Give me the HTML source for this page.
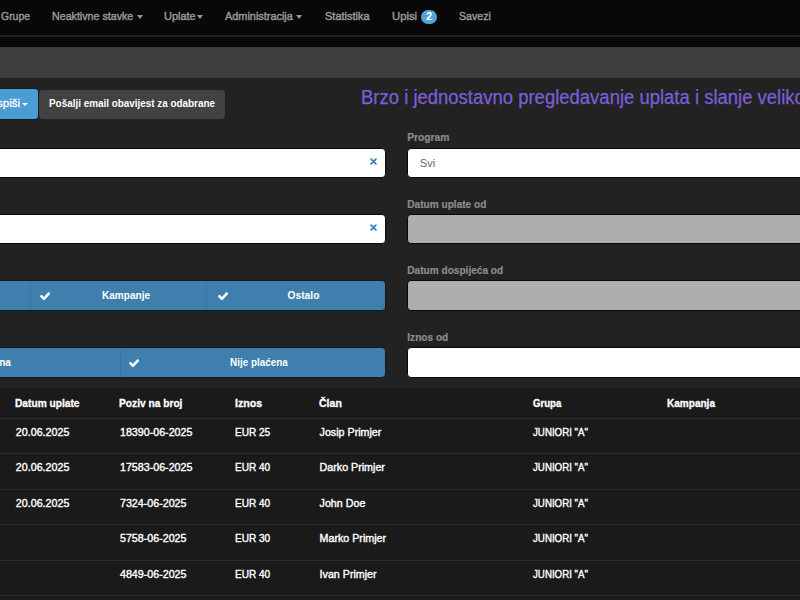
<!DOCTYPE html>
<html><head><meta charset="utf-8"><style>
*{margin:0;padding:0;box-sizing:border-box}
html,body{width:800px;height:600px;overflow:hidden;background:#222222;font-family:"Liberation Sans",sans-serif}
.a{position:absolute;white-space:nowrap}
.r{position:absolute}
</style></head><body>
<div class="r" style="left:0;top:0;width:800px;height:47px;background:#080808"></div>
<div class="r" style="left:0;top:35px;width:800px;height:2px;background:#202020"></div>
<div class="a" style="left:0.98px;top:6.49px;font-size:11px;line-height:20px;font-weight:normal;color:#9a9a9a;transform:scaleX(0.95);transform-origin:0 0;-webkit-text-stroke:0.42px #9a9a9a">Grupe</div>
<div class="a" style="left:51.95px;top:6.49px;font-size:11px;line-height:20px;font-weight:normal;color:#9a9a9a;transform:scaleX(0.97);transform-origin:0 0;-webkit-text-stroke:0.42px #9a9a9a">Neaktivne stavke</div>
<div class="a" style="left:164.12px;top:6.49px;font-size:11px;line-height:20px;font-weight:normal;color:#9a9a9a;transform:scaleX(0.9973);transform-origin:0 0;-webkit-text-stroke:0.42px #9a9a9a">Uplate</div>
<div class="a" style="left:225.20px;top:6.49px;font-size:11px;line-height:20px;font-weight:normal;color:#9a9a9a;transform:scaleX(0.9909);transform-origin:0 0;-webkit-text-stroke:0.42px #9a9a9a">Administracija</div>
<div class="a" style="left:324.95px;top:6.49px;font-size:11px;line-height:20px;font-weight:normal;color:#9a9a9a;transform:scaleX(1.0018);transform-origin:0 0;-webkit-text-stroke:0.42px #9a9a9a">Statistika</div>
<div class="a" style="left:391.80px;top:6.49px;font-size:11px;line-height:20px;font-weight:normal;color:#9a9a9a;transform:scaleX(1.0236);transform-origin:0 0;-webkit-text-stroke:0.42px #9a9a9a">Upisi</div>
<div class="a" style="left:458.97px;top:6.49px;font-size:11px;line-height:20px;font-weight:normal;color:#9a9a9a;transform:scaleX(0.9627);transform-origin:0 0;-webkit-text-stroke:0.42px #9a9a9a">Savezi</div>
<div class="r" style="left:136.5px;top:15px;width:0;height:0;border-left:3.5px solid transparent;border-right:3.5px solid transparent;border-top:4px solid #9a9a9a"></div>
<div class="r" style="left:196.5px;top:15px;width:0;height:0;border-left:3.5px solid transparent;border-right:3.5px solid transparent;border-top:4px solid #9a9a9a"></div>
<div class="r" style="left:296.2px;top:15px;width:0;height:0;border-left:3.5px solid transparent;border-right:3.5px solid transparent;border-top:4px solid #9a9a9a"></div>
<div class="a" style="left:421px;top:10.3px;width:16.2px;height:14.2px;border-radius:8px;background:#55a2da"></div>
<div class="a" style="left:426.18px;top:7.40px;font-size:10.4px;line-height:20px;font-weight:bold;color:#fff;-webkit-text-stroke:0.2px #fff">2</div>
<div class="r" style="left:0;top:47px;width:800px;height:31px;background:#3d3d3d"></div>
<div class="r" style="left:-20px;top:88px;width:59px;height:32px;border-radius:4px;background:#4b9dd3;border:1px solid #0a1a28"></div>
<div class="a" style="right:780px;top:93.42px;font-size:11.5px;line-height:20px;color:#fff;-webkit-text-stroke:0.3px #fff">Ispiši</div>
<div class="r" style="left:22px;top:103.3px;width:0;height:0;border-left:3.0px solid transparent;border-right:3.0px solid transparent;border-top:3px solid #fff"></div>
<div class="r" style="left:39px;top:90px;width:186px;height:29px;border-radius:4px;background:#424242"></div>
<div class="a" style="left:49.31px;top:93.26px;font-size:10.5px;line-height:20px;font-weight:bold;color:#fff;transform:scaleX(0.942);transform-origin:0 0">Pošalji email obavijest za odabrane</div>
<div class="a" style="left:360.75px;top:88.31px;font-size:19.3px;line-height:20px;font-weight:normal;color:#7b5fd8;transform:scaleX(0.9585);transform-origin:0 0;-webkit-text-stroke:0.25px #7b5fd8">Brzo i jednostavno pregledavanje uplata i slanje velikog broja</div>
<div class="r" style="left:-10px;top:148px;width:396px;height:30px;border-radius:4px;background:#fff;border:1px solid #080808"></div>
<svg class="r" style="left:370px;top:158px" width="7" height="7" viewBox="0 0 7 7"><path d="M1.1 1.1L5.9 5.9M5.9 1.1L1.1 5.9" stroke="#3580bf" stroke-width="1.7" stroke-linecap="round"/></svg>
<div class="r" style="left:-10px;top:214px;width:396px;height:30px;border-radius:4px;background:#fff;border:1px solid #080808"></div>
<svg class="r" style="left:370px;top:224px" width="7" height="7" viewBox="0 0 7 7"><path d="M1.1 1.1L5.9 5.9M5.9 1.1L1.1 5.9" stroke="#3580bf" stroke-width="1.7" stroke-linecap="round"/></svg>
<div class="r" style="left:-10px;top:280px;width:396px;height:31px;border-radius:4px;background:#3f7fad;border:1px solid #0e1a24"></div>
<div class="r" style="left:-10px;top:347px;width:396px;height:31px;border-radius:4px;background:#3f7fad;border:1px solid #0e1a24"></div>
<div class="r" style="left:30px;top:281px;width:1px;height:29px;background:#3a76a2"></div>
<div class="r" style="left:206px;top:281px;width:1px;height:29px;background:#3a76a2"></div>
<svg class="r" style="left:40.2px;top:291.8px" width="10.2" height="8" viewBox="121 310 1550 1148" preserveAspectRatio="none"><path d="M1671 566q0 40-28 68l-724 724-136 136q-28 28-68 28t-68-28l-136-136-362-362q-28-28-28-68t28-68l136-136q28-28 68-28t68 28l294 295 656-657q28-28 68-28t68 28l136 136q28 28 28 68z" fill="#fff"/></svg>
<svg class="r" style="left:218px;top:291.8px" width="10.2" height="8" viewBox="121 310 1550 1148" preserveAspectRatio="none"><path d="M1671 566q0 40-28 68l-724 724-136 136q-28 28-68 28t-68-28l-136-136-362-362q-28-28-28-68t28-68l136-136q28-28 68-28t68 28l294 295 656-657q28-28 68-28t68 28l136 136q28 28 28 68z" fill="#fff"/></svg>
<div class="a" style="left:102.00px;top:285.91px;font-size:10.06px;line-height:20px;font-weight:bold;color:#fff">Kampanje</div>
<div class="a" style="left:287.59px;top:285.86px;font-size:10.23px;line-height:20px;font-weight:bold;color:#fff">Ostalo</div>
<div class="r" style="left:120px;top:348px;width:1px;height:29px;background:#3a76a2"></div>
<svg class="r" style="left:129px;top:358.5px" width="10.2" height="8" viewBox="121 310 1550 1148" preserveAspectRatio="none"><path d="M1671 566q0 40-28 68l-724 724-136 136q-28 28-68 28t-68-28l-136-136-362-362q-28-28-28-68t28-68l136-136q28-28 68-28t68 28l294 295 656-657q28-28 68-28t68 28l136 136q28 28 28 68z" fill="#fff"/></svg>
<div class="a" style="left:-27.21px;top:352.70px;font-size:10.1px;line-height:20px;font-weight:bold;color:#fff">Plaćena</div>
<div class="a" style="left:230.31px;top:352.70px;font-size:10.1px;line-height:20px;font-weight:bold;color:#fff;transform:scaleX(0.98);transform-origin:0 0">Nije plaćena</div>
<div class="a" style="left:407.28px;top:128.25px;font-size:10.24px;line-height:20px;font-weight:bold;color:#8c8c8c;-webkit-text-stroke:0.2px #8c8c8c">Program</div>
<div class="a" style="left:407.29px;top:194.90px;font-size:10.1px;line-height:20px;font-weight:bold;color:#8c8c8c;-webkit-text-stroke:0.2px #8c8c8c">Datum uplate od</div>
<div class="a" style="left:407.29px;top:261.30px;font-size:10.1px;line-height:20px;font-weight:bold;color:#8c8c8c;-webkit-text-stroke:0.2px #8c8c8c">Datum dospijeća od</div>
<div class="a" style="left:407.29px;top:327.70px;font-size:10.1px;line-height:20px;font-weight:bold;color:#8c8c8c;-webkit-text-stroke:0.2px #8c8c8c">Iznos od</div>
<div class="r" style="left:407px;top:148px;width:400px;height:30px;border-radius:4px;background:#fff;border:1px solid #080808"></div>
<div class="r" style="left:407px;top:214px;width:400px;height:30px;border-radius:4px;background:#adafae;border:1px solid #080808"></div>
<div class="r" style="left:407px;top:280px;width:400px;height:31px;border-radius:4px;background:#adafae;border:1px solid #080808"></div>
<div class="r" style="left:407px;top:347px;width:400px;height:31px;border-radius:4px;background:#fff;border:1px solid #080808"></div>
<div class="a" style="left:420.06px;top:152.83px;font-size:10.87px;line-height:20px;font-weight:normal;color:#666">Svi</div>
<div class="r" style="left:0;top:388px;width:800px;height:212px;background:#1a1a1a"></div>
<div class="r" style="left:0;top:418px;width:800px;height:1px;background:#2b2b2b"></div>
<div class="r" style="left:0;top:453px;width:800px;height:1px;background:#2b2b2b"></div>
<div class="r" style="left:0;top:489px;width:800px;height:1px;background:#2b2b2b"></div>
<div class="r" style="left:0;top:524px;width:800px;height:1px;background:#2b2b2b"></div>
<div class="r" style="left:0;top:560px;width:800px;height:1px;background:#2b2b2b"></div>
<div class="r" style="left:0;top:595px;width:800px;height:1px;background:#2b2b2b"></div>
<div class="a" style="left:14.69px;top:394.03px;font-size:10.3px;line-height:20px;font-weight:bold;color:#fff;transform:scaleX(0.9893);transform-origin:0 0;-webkit-text-stroke:0.3px #fff">Datum uplate</div>
<div class="a" style="left:119.09px;top:394.03px;font-size:10.3px;line-height:20px;font-weight:bold;color:#fff;transform:scaleX(0.9903);transform-origin:0 0;-webkit-text-stroke:0.3px #fff">Poziv na broj</div>
<div class="a" style="left:234.55px;top:394.03px;font-size:10.3px;line-height:20px;font-weight:bold;color:#fff;transform:scaleX(1.035);transform-origin:0 0;-webkit-text-stroke:0.3px #fff">Iznos</div>
<div class="a" style="left:318.88px;top:394.03px;font-size:10.3px;line-height:20px;font-weight:bold;color:#fff;transform:scaleX(1.0223);transform-origin:0 0;-webkit-text-stroke:0.3px #fff">Član</div>
<div class="a" style="left:532.92px;top:394.03px;font-size:10.3px;line-height:20px;font-weight:bold;color:#fff;transform:scaleX(0.934);transform-origin:0 0;-webkit-text-stroke:0.3px #fff">Grupa</div>
<div class="a" style="left:667.30px;top:394.03px;font-size:10.3px;line-height:20px;font-weight:bold;color:#fff;transform:scaleX(0.9748);transform-origin:0 0;-webkit-text-stroke:0.3px #fff">Kampanja</div>
<div class="a" style="left:15.86px;top:421.99px;font-size:10.7px;line-height:20px;font-weight:normal;color:#fff;-webkit-text-stroke:0.38px #fff">20.06.2025</div>
<div class="a" style="left:119.96px;top:421.99px;font-size:10.7px;line-height:20px;font-weight:normal;color:#fff;-webkit-text-stroke:0.38px #fff">18390-06-2025</div>
<div class="a" style="left:235.10px;top:421.99px;font-size:10.7px;line-height:20px;font-weight:normal;color:#fff;transform:scaleX(0.94);transform-origin:0 0;-webkit-text-stroke:0.38px #fff">EUR 25</div>
<div class="a" style="left:319.58px;top:421.99px;font-size:10.7px;line-height:20px;font-weight:normal;color:#fff;-webkit-text-stroke:0.38px #fff">Josip Primjer</div>
<div class="a" style="left:533.11px;top:421.99px;font-size:10.7px;line-height:20px;font-weight:normal;color:#fff;transform:scaleX(0.91);transform-origin:0 0;-webkit-text-stroke:0.38px #fff">JUNIORI "A"</div>
<div class="a" style="left:15.86px;top:457.49px;font-size:10.7px;line-height:20px;font-weight:normal;color:#fff;-webkit-text-stroke:0.38px #fff">20.06.2025</div>
<div class="a" style="left:119.96px;top:457.49px;font-size:10.7px;line-height:20px;font-weight:normal;color:#fff;-webkit-text-stroke:0.38px #fff">17583-06-2025</div>
<div class="a" style="left:235.10px;top:457.49px;font-size:10.7px;line-height:20px;font-weight:normal;color:#fff;transform:scaleX(0.94);transform-origin:0 0;-webkit-text-stroke:0.38px #fff">EUR 40</div>
<div class="a" style="left:319.58px;top:457.49px;font-size:10.7px;line-height:20px;font-weight:normal;color:#fff;-webkit-text-stroke:0.38px #fff">Darko Primjer</div>
<div class="a" style="left:533.11px;top:457.49px;font-size:10.7px;line-height:20px;font-weight:normal;color:#fff;transform:scaleX(0.91);transform-origin:0 0;-webkit-text-stroke:0.38px #fff">JUNIORI "A"</div>
<div class="a" style="left:15.86px;top:492.99px;font-size:10.7px;line-height:20px;font-weight:normal;color:#fff;-webkit-text-stroke:0.38px #fff">20.06.2025</div>
<div class="a" style="left:119.96px;top:492.99px;font-size:10.7px;line-height:20px;font-weight:normal;color:#fff;-webkit-text-stroke:0.38px #fff">7324-06-2025</div>
<div class="a" style="left:235.10px;top:492.99px;font-size:10.7px;line-height:20px;font-weight:normal;color:#fff;transform:scaleX(0.94);transform-origin:0 0;-webkit-text-stroke:0.38px #fff">EUR 40</div>
<div class="a" style="left:319.58px;top:492.99px;font-size:10.7px;line-height:20px;font-weight:normal;color:#fff;-webkit-text-stroke:0.38px #fff">John Doe</div>
<div class="a" style="left:533.11px;top:492.99px;font-size:10.7px;line-height:20px;font-weight:normal;color:#fff;transform:scaleX(0.91);transform-origin:0 0;-webkit-text-stroke:0.38px #fff">JUNIORI "A"</div>
<div class="a" style="left:119.96px;top:528.49px;font-size:10.7px;line-height:20px;font-weight:normal;color:#fff;-webkit-text-stroke:0.38px #fff">5758-06-2025</div>
<div class="a" style="left:235.10px;top:528.49px;font-size:10.7px;line-height:20px;font-weight:normal;color:#fff;transform:scaleX(0.94);transform-origin:0 0;-webkit-text-stroke:0.38px #fff">EUR 30</div>
<div class="a" style="left:319.58px;top:528.49px;font-size:10.7px;line-height:20px;font-weight:normal;color:#fff;-webkit-text-stroke:0.38px #fff">Marko Primjer</div>
<div class="a" style="left:533.11px;top:528.49px;font-size:10.7px;line-height:20px;font-weight:normal;color:#fff;transform:scaleX(0.91);transform-origin:0 0;-webkit-text-stroke:0.38px #fff">JUNIORI "A"</div>
<div class="a" style="left:119.96px;top:563.99px;font-size:10.7px;line-height:20px;font-weight:normal;color:#fff;-webkit-text-stroke:0.38px #fff">4849-06-2025</div>
<div class="a" style="left:235.10px;top:563.99px;font-size:10.7px;line-height:20px;font-weight:normal;color:#fff;transform:scaleX(0.94);transform-origin:0 0;-webkit-text-stroke:0.38px #fff">EUR 40</div>
<div class="a" style="left:319.58px;top:563.99px;font-size:10.7px;line-height:20px;font-weight:normal;color:#fff;-webkit-text-stroke:0.38px #fff">Ivan Primjer</div>
<div class="a" style="left:533.11px;top:563.99px;font-size:10.7px;line-height:20px;font-weight:normal;color:#fff;transform:scaleX(0.91);transform-origin:0 0;-webkit-text-stroke:0.38px #fff">JUNIORI "A"</div>
</body></html>
